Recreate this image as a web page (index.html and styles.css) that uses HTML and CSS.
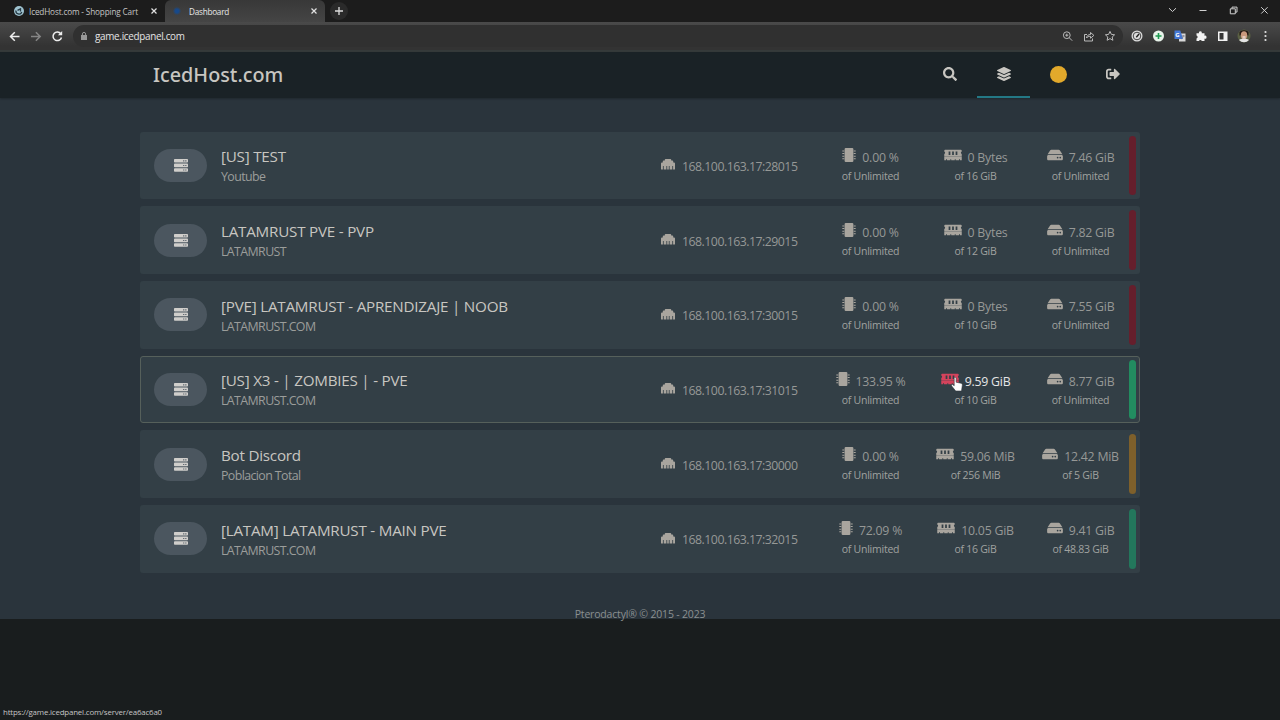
FILE: index.html
```
<!DOCTYPE html>
<html lang="en">
<head>
  <meta charset="UTF-8">
  <meta name="viewport" content="width=device-width, initial-scale=1.0">
  <title>Dashboard</title>
  <link rel="stylesheet" href="styles.css">
</head>
<body>
  <!-- Icon sprites -->
  <svg class="sprites">
    <symbol id="i-server" viewBox="0 0 14 13">
      <path fill="currentColor" d="M.8 0h12.4a.8.8 0 0 1 .8.8v2a.8.8 0 0 1-.8.8H.8a.8.8 0 0 1-.8-.8v-2A.8.8 0 0 1 .8 0zm0 4.6h12.4a.8.8 0 0 1 .8.8v2a.8.8 0 0 1-.8.8H.8a.8.8 0 0 1-.8-.8v-2a.8.8 0 0 1 .8-.8zm0 4.6h12.4a.8.8 0 0 1 .8.8v2a.8.8 0 0 1-.8.8H.8a.8.8 0 0 1-.8-.8v-2a.8.8 0 0 1 .8-.8z"/>
      <path fill="#4b565f" d="M9.2 1.3h1.1v1.1H9.2zm2.1 0h1.1v1.1h-1.1zM9.2 5.9h1.1V7H9.2zm2.1 0h1.1V7h-1.1zm-2.1 4.6h1.1v1.1H9.2zm2.1 0h1.1v1.1h-1.1z"/>
    </symbol>
    <symbol id="i-ethernet" viewBox="0 0 14 14">
      <path fill="currentColor" d="M0 12V6.600a1 1 0 0 1 1-1h.8V4.300a.8.8 0 0 1 .8-.8h1.200v-.7a.8.8 0 0 1 .8-.8h4.800a.8.8 0 0 1 .8.8v.7h1.200a.8.8 0 0 1 .8.8v1.300h.8a1 1 0 0 1 1 1V12a.6.6 0 0 1-.6.6h-1.300V9h-.8v3.600H8.600V9h-.8v3.600H6.200V9h-.8v3.600H2.700V9h-.8v3.600H.6A.6.6 0 0 1 0 12z"/>
    </symbol>
    <symbol id="i-cpu" viewBox="0 0 14 14">
      <path fill="currentColor" d="M3.800 0h6.400a1.200 1.200 0 0 1 1.200 1.200v11.600a1.200 1.200 0 0 1-1.200 1.200H3.800a1.200 1.200 0 0 1-1.200-1.200V1.200A1.200 1.200 0 0 1 3.800 0zM.3 2.500h1.900v1H.3zm0 2.600h1.900v1H.3zm0 2.600h1.900v1H.3zm0 2.600h1.900v1H.3zm11.500-7.800h1.900v1h-1.900zm0 2.600h1.900v1h-1.900zm0 2.600h1.900v1h-1.900zm0 2.600h1.900v1h-1.900z"/>
    </symbol>
    <symbol id="i-memory" viewBox="0 0 640 512">
      <path fill="currentColor" d="M640 131V96c0-17.700-14.300-32-32-32H32C14.300 64 0 78.300 0 96v35c18.600 6.600 32 24.200 32 45s-13.400 38.400-32 45v99h640v-99c-18.600-6.600-32-24.200-32-45s13.400-38.400 32-45zM224 256h-64V128h64v128zm128 0h-64V128h64v128zm128 0h-64V128h64v128zM0 448h64v-26.700c0-8.800 7.200-16 16-16s16 7.200 16 16V448h128v-26.700c0-8.800 7.200-16 16-16s16 7.200 16 16V448h128v-26.700c0-8.800 7.200-16 16-16s16 7.200 16 16V448h128v-26.700c0-8.800 7.200-16 16-16s16 7.200 16 16V448h64v-116H0v116z"/>
    </symbol>
    <symbol id="i-disk" viewBox="0 0 576 512">
      <path fill="currentColor" d="M576 304v96c0 26.500-21.500 48-48 48H48c-26.500 0-48-21.500-48-48v-96c0-26.500 21.500-48 48-48h480c26.500 0 48 21.500 48 48zm-48-80a79.600 79.600 0 0 1 30.800 6.200L462.300 85.400A48 48 0 0 0 422.300 64H153.700a48 48 0 0 0-39.900 21.400L17.200 230.200A79.600 79.600 0 0 1 48 224h480zm-48 96c-17.700 0-32 14.300-32 32s14.300 32 32 32 32-14.300 32-32-14.300-32-32-32zm-96 0c-17.700 0-32 14.300-32 32s14.300 32 32 32 32-14.300 32-32-14.300-32-32-32z"/>
    </symbol>
  </svg>

  <div class="tabs">
    <div class="tab tab-first">
      <svg class="favicon" viewBox="0 0 10 10"><circle cx="5" cy="5" r="5" fill="#9fc3d0"/><path d="M2 4.500A3 3 0 0 0 7.800 6M3.500 4.300l3-1.500v2.800" fill="none" stroke="#263a45" stroke-width="1.300"/></svg>
      <span class="tab-name">IcedHost.com - Shopping Cart</span>
      <svg class="close" viewBox="0 0 6 6"><path d="M.5.5l5 5m0-5l-5 5" stroke="currentColor" stroke-width="1.200"/></svg>
    </div>
    <div class="tab active">
      <span class="dot"></span>
      <span class="tab-name">Dashboard</span>
      <svg class="close" viewBox="0 0 6 6"><path d="M.5.5l5 5m0-5l-5 5" stroke="currentColor" stroke-width="1.200"/></svg>
    </div>
    <div class="new-tab"><svg viewBox="0 0 8 8"><path d="M4 0v8M0 4h8" stroke="currentColor" stroke-width="1.300"/></svg></div>
    <svg class="window-buttons" viewBox="0 0 106 12" fill="none" stroke="#d0d0d0">
      <path d="M4 4.200l3.500 3.300L11 4.200"/>
      <path d="M34.500 6.500h7"/>
      <path d="M65.300 4.800h5v5h-5zM67 4.500V3.100h5v5h-1.500"/>
      <path d="M96.200 3.200l6.400 6.400m0-6.400l-6.400 6.400"/>
    </svg>
  </div>

  <div class="toolbar">
    <svg class="nav-buttons" viewBox="0 0 54 12" fill="none" stroke-width="1.500">
      <path d="M10.500 6.500H1.500M5.800 2.200L1.500 6.500l4.300 4.300" stroke="#eee"/>
      <path d="M22 6.500h9M26.900 2.200l4.300 4.300-4.300 4.300" stroke="#858585"/>
      <path d="M52.500 7.500A4.300 4.300 0 1 1 51.800 3.700" stroke="#eee"/><path d="M53.200 1v4.300h-4.300z" fill="#eee"/>
    </svg>
    <div class="address">
      <svg class="lock" viewBox="0 0 6 8"><path d="M0 3h6v5H0z" fill="#979797"/><path d="M1.400 3V2a1.600 1.600 0 0 1 3.200 0v1" fill="none" stroke="#979797"/></svg>
      <span>game.icedpanel.com</span>
      <svg class="address-icons" viewBox="0 0 54 12" fill="none" stroke="#b9b9b9">
        <circle cx="4.800" cy="5.200" r="3.400"/><path d="M7.200 7.700l3 3M3.300 5.200h3M4.800 3.700v3"/>
        <path d="M25 4.500h-2.500v6.500h8V8.500M24.500 8c.3-2.500 2-3.500 4-3.500V2.500L31.900 5.400 28.500 8.200V6.300c-2 0-3 .5-4 1.700z"/>
        <path d="M48 1.400l1.400 3 3.200.4-2.400 2.200.7 3.300L48 8.600l-2.900 1.700.7-3.300-2.400-2.200 3.200-.4z"/>
      </svg>
    </div>
    <svg class="extensions" viewBox="0 0 140 14">
      <circle cx="6" cy="7" r="5.500" fill="#ddd"/><circle cx="6" cy="7" r="3.800" fill="none" stroke="#444"/><path d="M5.300 8.300l2.700-3.300" stroke="#222" stroke-width="1.400"/>
      <circle cx="27.500" cy="7" r="5.500" fill="#e8f3ea"/><path d="M27.500 4v6M24.500 7h6" stroke="#1d9b50" stroke-width="1.600"/>
      <path d="M48 4.500h6.500v8H48z" fill="#d8d8d8"/><path d="M43.500 1.500h5.800l2.700 8.500h-8.500z" fill="#4377d6"/><text x="44.300" y="7.800" class="translate-letter">G</text><path d="M50.800 7h3m-1.500-.8c0 2-1 3-1.800 3.600" stroke="#667" stroke-width=".7" fill="none"/>
      <path d="M65.500 4.200h2.400a1.500 1.500 0 1 1 2.900 0h2.700v2.600a1.500 1.500 0 1 1 0 2.800V12h-2.700a1.500 1.500 0 0 0-2.900 0h-2.400V9.400a1.500 1.500 0 0 0 0-2.900z" fill="#f2f2f2"/>
      <path d="M87 2.500h9.500V12H87z" fill="#f2f2f2"/><path d="M88.500 4h4v6.500h-4z" fill="#363636"/>
      <circle cx="113" cy="7" r="6.500" fill="#5a6043"/><path d="M108.500 3.500c1-3 8-3 9 0v3h-9z" fill="#211713"/><ellipse cx="113" cy="6.300" rx="3.200" ry="4" fill="#c99a7c"/><path d="M108 11c3-2 7-2 10 0a6.500 6.500 0 0 1-10 0z" fill="#e5e5e5"/><path d="M111.500 8h3" stroke="#fff"/>
      <g fill="#e0e0e0"><circle cx="134.500" cy="3" r="1.100"/><circle cx="134.500" cy="7" r="1.100"/><circle cx="134.500" cy="11" r="1.100"/></g>
    </svg>
  </div>

  <div class="page">
    <header class="navbar">
      <div class="navbar-inner">
        <a class="logo">IcedHost.com</a>
        <nav class="nav-links">
          <a><svg viewBox="0 0 512 512"><path fill="currentColor" d="M505 442.700L405.300 343c-4.500-4.500-10.600-7-17-7H372c27.600-35.300 44-79.700 44-128C416 93.100 322.900 0 208 0S0 93.100 0 208s93.100 208 208 208c48.300 0 92.700-16.400 128-44v16.300c0 6.400 2.500 12.500 7 17l99.700 99.700c9.400 9.400 24.600 9.400 33.900 0l28.300-28.300c9.400-9.400 9.400-24.600.1-34zM208 336c-70.700 0-128-57.200-128-128 0-70.700 57.200-128 128-128 70.700 0 128 57.200 128 128 0 70.700-57.200 128-128 128z"/></svg></a>
          <a class="current"><svg viewBox="0 0 512 512"><path fill="currentColor" d="M12.400 148l232.900 105.700c6.800 3.100 14.500 3.100 21.300 0L499.600 148c16.600-7.500 16.600-32.500 0-40L266.700 2.300a25.600 25.600 0 0 0-21.300 0L12.400 108c-16.600 7.500-16.600 32.500 0 40zm487.200 88.300l-58.100-26.300-161.600 73.300c-7.600 3.400-15.600 5.200-23.900 5.200s-16.300-1.700-23.900-5.200L70.500 210l-58.100 26.300c-16.600 7.500-16.600 32.500 0 40l232.900 105.600c6.800 3.100 14.500 3.100 21.300 0L499.600 276.300c16.600-7.500 16.600-32.500 0-40zm0 127.800l-57.900-26.200-161.900 73.400c-7.600 3.400-15.600 5.200-23.900 5.200s-16.300-1.700-23.900-5.200L70.300 337.900l-57.900 26.200c-16.600 7.500-16.600 32.500 0 40l232.900 105.600c6.800 3.100 14.500 3.100 21.300 0L499.600 404.100c16.600-7.500 16.600-32.500 0-40z"/></svg></a>
          <a class="account"><span class="avatar"></span></a>
          <a><svg viewBox="0 0 512 512"><path fill="currentColor" d="M497 273L329 441c-15 15-41 4.500-41-17v-96H152c-13.300 0-24-10.700-24-24v-96c0-13.300 10.700-24 24-24h136V88c0-21.400 25.900-32 41-17l168 168c9.300 9.400 9.300 24.600 0 34zM192 436v-40c0-6.600-5.400-12-12-12H96c-17.700 0-32-14.300-32-32V160c0-17.700 14.300-32 32-32h84c6.600 0 12-5.400 12-12V76c0-6.600-5.400-12-12-12H96c-53 0-96 43-96 96v192c0 53 43 96 96 96h84c6.600 0 12-5.400 12-12z"/></svg></a>
        </nav>
      </div>
    </header>

    <main class="servers">
      <a class="server offline">
        <span class="server-icon"><svg><use href="#i-server"/></svg></span>
        <div class="server-info"><p class="name">[US] TEST</p><p class="desc">Youtube</p></div>
        <div class="allocation"><svg><use href="#i-ethernet"/></svg>168.100.163.17:28015</div>
        <div class="stat"><p class="value"><svg class="cpu"><use href="#i-cpu"/></svg>0.00 %</p><p class="limit">of Unlimited</p></div>
        <div class="stat"><p class="value"><svg class="memory"><use href="#i-memory"/></svg>0 Bytes</p><p class="limit">of 16 GiB</p></div>
        <div class="stat"><p class="value"><svg class="disk"><use href="#i-disk"/></svg>7.46 GiB</p><p class="limit">of Unlimited</p></div>
      </a>

      <a class="server offline">
        <span class="server-icon"><svg><use href="#i-server"/></svg></span>
        <div class="server-info"><p class="name">LATAMRUST PVE - PVP</p><p class="desc">LATAMRUST</p></div>
        <div class="allocation"><svg><use href="#i-ethernet"/></svg>168.100.163.17:29015</div>
        <div class="stat"><p class="value"><svg class="cpu"><use href="#i-cpu"/></svg>0.00 %</p><p class="limit">of Unlimited</p></div>
        <div class="stat"><p class="value"><svg class="memory"><use href="#i-memory"/></svg>0 Bytes</p><p class="limit">of 12 GiB</p></div>
        <div class="stat"><p class="value"><svg class="disk"><use href="#i-disk"/></svg>7.82 GiB</p><p class="limit">of Unlimited</p></div>
      </a>

      <a class="server offline">
        <span class="server-icon"><svg><use href="#i-server"/></svg></span>
        <div class="server-info"><p class="name">[PVE] LATAMRUST - APRENDIZAJE | NOOB</p><p class="desc">LATAMRUST.COM</p></div>
        <div class="allocation"><svg><use href="#i-ethernet"/></svg>168.100.163.17:30015</div>
        <div class="stat"><p class="value"><svg class="cpu"><use href="#i-cpu"/></svg>0.00 %</p><p class="limit">of Unlimited</p></div>
        <div class="stat"><p class="value"><svg class="memory"><use href="#i-memory"/></svg>0 Bytes</p><p class="limit">of 10 GiB</p></div>
        <div class="stat"><p class="value"><svg class="disk"><use href="#i-disk"/></svg>7.55 GiB</p><p class="limit">of Unlimited</p></div>
      </a>

      <a class="server online hovered">
        <span class="server-icon"><svg><use href="#i-server"/></svg></span>
        <div class="server-info"><p class="name">[US] X3 - | ZOMBIES | - PVE</p><p class="desc">LATAMRUST.COM</p></div>
        <div class="allocation"><svg><use href="#i-ethernet"/></svg>168.100.163.17:31015</div>
        <div class="stat"><p class="value"><svg class="cpu"><use href="#i-cpu"/></svg>133.95 %</p><p class="limit">of Unlimited</p></div>
        <div class="stat alarm"><p class="value"><svg class="memory"><use href="#i-memory"/></svg>9.59 GiB</p><p class="limit">of 10 GiB</p>
          <svg class="pointer" viewBox="0 0 12 15"><path d="M3.200 1.200c0-1.300 1.900-1.300 1.900 0v4l4.800 1c1.100.3 1.600 1 1.400 2.200L10.500 14H4.700L.7 9C0 8 1.200 7 2 7.800l1.200 1z" fill="#fff" stroke="#333b40" stroke-width=".6"/></svg>
        </div>
        <div class="stat"><p class="value"><svg class="disk"><use href="#i-disk"/></svg>8.77 GiB</p><p class="limit">of Unlimited</p></div>
      </a>

      <a class="server starting">
        <span class="server-icon"><svg><use href="#i-server"/></svg></span>
        <div class="server-info"><p class="name">Bot Discord</p><p class="desc">Poblacion Total</p></div>
        <div class="allocation"><svg><use href="#i-ethernet"/></svg>168.100.163.17:30000</div>
        <div class="stat"><p class="value"><svg class="cpu"><use href="#i-cpu"/></svg>0.00 %</p><p class="limit">of Unlimited</p></div>
        <div class="stat"><p class="value"><svg class="memory"><use href="#i-memory"/></svg>59.06 MiB</p><p class="limit">of 256 MiB</p></div>
        <div class="stat"><p class="value"><svg class="disk"><use href="#i-disk"/></svg>12.42 MiB</p><p class="limit">of 5 GiB</p></div>
      </a>

      <a class="server online">
        <span class="server-icon"><svg><use href="#i-server"/></svg></span>
        <div class="server-info"><p class="name">[LATAM] LATAMRUST - MAIN PVE</p><p class="desc">LATAMRUST.COM</p></div>
        <div class="allocation"><svg><use href="#i-ethernet"/></svg>168.100.163.17:32015</div>
        <div class="stat"><p class="value"><svg class="cpu"><use href="#i-cpu"/></svg>72.09 %</p><p class="limit">of Unlimited</p></div>
        <div class="stat"><p class="value"><svg class="memory"><use href="#i-memory"/></svg>10.05 GiB</p><p class="limit">of 16 GiB</p></div>
        <div class="stat"><p class="value"><svg class="disk"><use href="#i-disk"/></svg>9.41 GiB</p><p class="limit">of 48.83 GiB</p></div>
      </a>
    </main>

    <footer>Pterodactyl® © 2015 - 2023</footer>
  </div>

  <div class="status-url">https://game.icedpanel.com/server/ea6ac6a0</div>
</body>
</html>
```
FILE: styles.css
```
* {
  box-sizing: border-box;
}
body {
  margin: 0;
  height: 720px;
  overflow: hidden;
  background: #191d1e;
  font-family: "Open Sans", "Noto Sans", sans-serif;
  color: #c8c6c1;
}
p {
  margin: 0;
}
svg {
  display: block;
  flex: none;
}
.sprites {
  display: none;
}

/* Browser window */
.tabs {
  display: flex;
  align-items: center;
  height: 22px;
  background: #1c1c1c;
  font-size: 8.2px;
}
.tab {
  display: flex;
  align-items: center;
  height: 22px;
  padding-right: 8px;
  color: #c4c4c4;
}
.tab-first {
  width: 165px;
  padding-left: 14px;
}
.tab.active {
  width: 160px;
  padding-left: 8px;
  background: linear-gradient(#383838, #454545);
  border-radius: 6px 6px 0 0;
  color: #e8e8e8;
}
.tab.active .tab-name {
  letter-spacing: -0.25px;
}
.tab-name {
  flex: 1;
  white-space: nowrap;
  letter-spacing: -0.15px;
}
.favicon {
  width: 10px;
  height: 10px;
  margin-right: 5px;
}
.dot {
  width: 8px;
  height: 8px;
  margin-right: 8px;
  border-radius: 50%;
  background: radial-gradient(#17498a 30%, #3b3b3b00 75%);
}
.close {
  width: 6px;
  height: 6px;
  color: #e2e2e2;
}
.new-tab {
  display: flex;
  align-items: center;
  justify-content: center;
  width: 18px;
  height: 18px;
  margin-left: 5px;
  border-radius: 50%;
  background: #2a2a2a;
  color: #ddd;
}
.new-tab svg {
  width: 8px;
  height: 8px;
}
.window-buttons {
  width: 106px;
  height: 12px;
  margin-left: auto;
  margin-right: 9px;
  margin-bottom: 3px;
}
.toolbar {
  display: flex;
  align-items: center;
  height: 30px;
  padding: 0 5px 0 9px;
  background: linear-gradient(#4a4a4a, #333 85%);
  border-bottom: 2px solid #353a3a;
}
.nav-buttons {
  width: 54px;
  height: 12px;
  margin-right: 10px;
}
.address {
  display: flex;
  align-items: center;
  width: 1050px;
  height: 22px;
  padding: 0 7px 0 8px;
  border-radius: 11px;
  background: #303030;
  color: #e4e4e4;
  font-size: 9.4px;
  letter-spacing: -0.3px;
}
.lock {
  width: 6px;
  height: 8px;
  margin-right: 8px;
}
.address span {
  font-size: 9.9px;
}
.address-icons {
  width: 54px;
  height: 12px;
  margin-left: auto;
}
.extensions {
  width: 140px;
  height: 14px;
  margin-left: 8px;
}
.translate-letter {
  font-size: 6px;
  font-weight: 700;
  fill: #fff;
}
.status-url {
  position: absolute;
  left: 3px;
  bottom: 2px;
  font-size: 7.9px;
  line-height: 12px;
  letter-spacing: -0.18px;
  color: #c4c4c4;
}

/* Panel */
.page {
  height: 567px;
  background: #2a343c;
}
.navbar {
  height: 46px;
  background: #1a2226;
  box-shadow: 0 1px 2px rgba(0, 0, 0, 0.25);
}
.navbar-inner {
  display: flex;
  justify-content: space-between;
  width: 1000px;
  height: 46px;
  margin: 0 auto;
}
.logo {
  padding-left: 13px;
  font-family: "Noto Sans", sans-serif;
  font-size: 19.8px;
  font-weight: 500;
  line-height: 46px;
}
.nav-links {
  display: flex;
}
.nav-links a {
  display: flex;
  align-items: center;
  justify-content: center;
  width: 54px;
  border-bottom: 2px solid transparent;
}
.nav-links a.current {
  width: 53px;
  border-color: #237885;
}
.nav-links a.account {
  width: 56px;
}
.nav-links svg {
  width: 14px;
  height: 14px;
}
.avatar {
  width: 17px;
  height: 17px;
  border-radius: 50%;
  background: #e2a92b;
}
.servers {
  display: flex;
  flex-direction: column;
  gap: 7px;
  width: 1000px;
  margin: 0 auto;
  padding-top: 33.5px;
}
.server {
  position: relative;
  display: flex;
  align-items: center;
  height: 67.7px;
  padding: 0 6px 0 13px;
  border: 1px solid transparent;
  border-radius: 3px;
  background: #333f46;
}
.server.hovered {
  border-color: #56605b;
}
.server::after {
  content: "";
  position: absolute;
  top: 3px;
  right: 3px;
  bottom: 3px;
  width: 7px;
  border-radius: 4px;
}
.server.offline::after {
  background: #651f2c;
}
.server.online::after {
  background: #23775c;
}
.server.hovered::after {
  background: #228c60;
}
.server.starting::after {
  background: #7e602b;
}
.server-icon {
  display: flex;
  align-items: center;
  justify-content: center;
  width: 53px;
  height: 33px;
  margin-right: 14px;
  border-radius: 17px;
  background: #4b565f;
  color: #d0cecb;
}
.server-icon svg {
  width: 14px;
  height: 13px;
}
.server-info {
  flex: 1;
  padding-top: 3px;
}
.name {
  font-size: 15.2px;
  line-height: 21px;
  letter-spacing: -0.22px;
  white-space: nowrap;
}
.desc {
  font-size: 12.4px;
  line-height: 20px;
  letter-spacing: -0.6px;
  color: #9b9d9b;
}
.allocation {
  display: flex;
  align-items: center;
  width: 157px;
  padding-top: 2px;
  color: #969896;
  font-size: 12.3px;
  letter-spacing: -0.5px;
}
.allocation svg {
  width: 14px;
  height: 14px;
  margin: -4px 7px 0 0;
  color: #a9a59e;
}
.stat {
  position: relative;
  width: 105px;
  padding-top: 1px;
  text-align: center;
  color: #969896;
}
.value {
  display: flex;
  justify-content: center;
  font-size: 12.3px;
  line-height: 20px;
  letter-spacing: -0.22px;
}
.value svg {
  margin-right: 6px;
  color: #a9a59e;
}
.cpu {
  width: 14px;
  height: 14px;
}
.memory {
  width: 18px;
  height: 14px;
}
.disk {
  width: 16px;
  height: 14px;
}
.limit {
  font-size: 10.5px;
  line-height: 16px;
  letter-spacing: -0.25px;
  color: #a0a2a0;
}
.alarm .value {
  color: #e6e6e6;
}
.alarm .memory {
  color: #d4435c;
}
.pointer {
  position: absolute;
  left: 28px;
  top: 6px;
  width: 12px;
  height: 15px;
}
footer {
  margin-top: 33px;
  font-size: 10.5px;
  line-height: 16px;
  letter-spacing: -0.18px;
  text-align: center;
  color: #8b9091;
}
```
